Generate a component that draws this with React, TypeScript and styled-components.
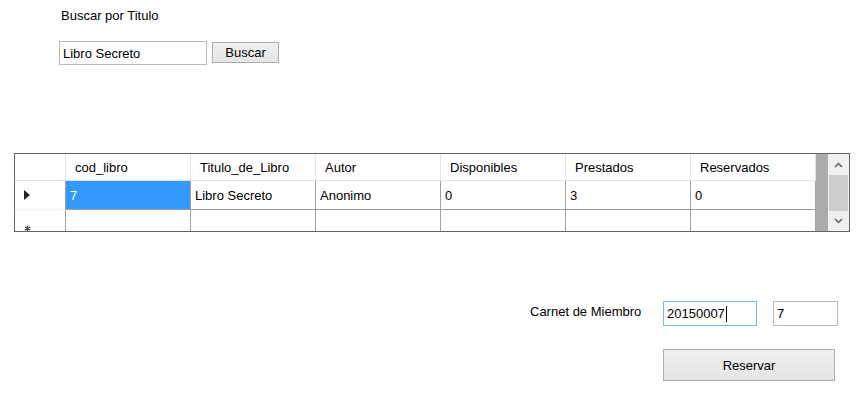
import React from "react";
import styled, { createGlobalStyle } from "styled-components";

const GlobalStyle = createGlobalStyle`
  html, body { margin: 0; padding: 0; background: #ffffff; overflow: hidden; }
  body { font-family: "Liberation Sans", Arial, sans-serif; font-size: 13px; color: #000; }
`;

const Page = styled.div`
  width: 857px;
  height: 417px;
  display: flex;
  flex-direction: column;
`;

const FieldLabel = styled.div<{ $left?: number; $top?: number; $w?: number }>`
  margin-left: ${(p) => p.$left ?? 0}px;
  margin-top: ${(p) => p.$top ?? 0}px;
  ${(p) => (p.$w ? `width: ${p.$w}px;` : "")}
  line-height: 15px;
  white-space: nowrap;
`;

const Row = styled.div<{ $left: number; $top: number }>`
  display: flex;
  align-items: flex-start;
  margin-left: ${(p) => p.$left}px;
  margin-top: ${(p) => p.$top}px;
`;

const TextBox = styled.div<{ $w: number; $h?: number; $focused?: boolean; $ml?: number }>`
  box-sizing: border-box;
  width: ${(p) => p.$w}px;
  height: ${(p) => p.$h ?? 25}px;
  margin-left: ${(p) => p.$ml ?? 0}px;
  border: 1px solid ${(p) => (p.$focused ? "#7eb4ea" : "#b9b9b9")};
  background: #fff;
  padding-left: 3px;
  display: flex;
  align-items: center;
  white-space: nowrap;
`;

const Caret = styled.span`
  display: inline-block;
  width: 1px;
  height: 16px;
  background: #000;
  margin-left: 1px;
`;

const Button = styled.div<{ $w: number; $h: number; $ml?: number; $mt?: number }>`
  box-sizing: border-box;
  width: ${(p) => p.$w}px;
  height: ${(p) => p.$h}px;
  margin-left: ${(p) => p.$ml ?? 0}px;
  margin-top: ${(p) => p.$mt ?? 0}px;
  border: 1px solid #adadad;
  background: linear-gradient(#f0f0f0, #e5e5e5);
  display: flex;
  align-items: center;
  justify-content: center;
`;

/* ---------- Data grid ---------- */

const GridFrame = styled.div`
  box-sizing: border-box;
  margin-left: 14px;
  margin-top: 88px;
  width: 836px;
  height: 79px;
  border: 1px solid #646464;
  display: flex;
  overflow: hidden;
`;

const GridArea = styled.div`
  flex: 1;
  background: #ababab;
  overflow: hidden;
  display: flex;
  flex-direction: column;
`;

const GridRow = styled.div<{ $h: number }>`
  display: flex;
  height: ${(p) => p.$h}px;
  flex-shrink: 0;
`;

const RowHeaderCell = styled.div<{ $header?: boolean; $alignTop?: boolean }>`
  box-sizing: border-box;
  width: 51px;
  flex-shrink: 0;
  background: #fff;
  border-right: 1px solid ${(p) => (p.$header ? "#e0e0e0" : "#a0a0a0")};
  border-bottom: 1px solid ${(p) => (p.$header ? "#e0e0e0" : "#eaf0f6")};
  display: flex;
  align-items: ${(p) => (p.$alignTop ? "flex-start" : "center")};
  padding-left: 9px;
  padding-top: ${(p) => (p.$alignTop ? 15 : 0)}px;
`;

const HeaderCell = styled.div`
  box-sizing: border-box;
  width: 125px;
  flex-shrink: 0;
  background: #fff;
  border-right: 1px solid #e3e3e3;
  border-bottom: 1px solid #e3e3e3;
  padding-left: 9px;
  display: flex;
  align-items: center;
  white-space: nowrap;
`;

const DataCell = styled.div<{ $selected?: boolean }>`
  box-sizing: border-box;
  width: 125px;
  flex-shrink: 0;
  background: ${(p) => (p.$selected ? "#3399ff" : "#fff")};
  color: ${(p) => (p.$selected ? "#fff" : "#000")};
  border-right: 1px solid #a0a0a0;
  border-bottom: 1px solid #a0a0a0;
  padding-left: 4px;
  display: flex;
  align-items: center;
  white-space: nowrap;
`;

const ScrollBar = styled.div`
  width: 21px;
  flex-shrink: 0;
  background: #f0f0f0;
  display: flex;
  flex-direction: column;
`;

const ScrollButton = styled.div<{ $h: number }>`
  height: ${(p) => p.$h}px;
  display: flex;
  align-items: center;
  justify-content: center;
  background: #f0f0f0;
  flex-shrink: 0;
`;

const Thumb = styled.div`
  height: 36px;
  margin: 0 1px;
  background: #cdcdcd;
  flex-shrink: 0;
`;

const Track = styled.div`
  flex: 1;
`;

const Chevron = ({ up }: { up?: boolean }) => (
  <svg width="9" height="6" viewBox="0 0 9 6">
    <path
      d={up ? "M1 5 L4.5 1.5 L8 5" : "M1 1 L4.5 4.5 L8 1"}
      fill="none"
      stroke="#606060"
      strokeWidth="1.5"
    />
  </svg>
);

const RowArrow = () => (
  <svg width="6" height="10" viewBox="0 0 6 10">
    <path d="M0 0 L6 5 L0 10 Z" fill="#222" />
  </svg>
);

const NewRowStar = () => (
  <svg width="7" height="7" viewBox="0 0 7 7">
    <path d="M3.5 0.5 V6.5 M0.8 2 L6.2 5 M0.8 5 L6.2 2" stroke="#444" strokeWidth="1.3" />
  </svg>
);

const columns = ["cod_libro", "Titulo_de_Libro", "Autor", "Disponibles", "Prestados", "Reservados"];
const rowData = ["7", "Libro Secreto", "Anonimo", "0", "3", "0"];

export default function App() {
  return (
    <Page>
      <GlobalStyle />
      <FieldLabel $left={61} $top={8}>Buscar por Titulo</FieldLabel>
      <Row $left={59} $top={18}>
        <TextBox $w={148} $h={24}>Libro Secreto</TextBox>
        <Button $w={67} $h={21} $ml={5} $mt={1}>Buscar</Button>
      </Row>

      <GridFrame>
        <GridArea>
          <GridRow $h={27}>
            <RowHeaderCell $header />
            {columns.map((c) => (
              <HeaderCell key={c}>{c}</HeaderCell>
            ))}
          </GridRow>
          <GridRow $h={29}>
            <RowHeaderCell>
              <RowArrow />
            </RowHeaderCell>
            {rowData.map((d, i) => (
              <DataCell key={i} $selected={i === 0}>{d}</DataCell>
            ))}
          </GridRow>
          <GridRow $h={24}>
            <RowHeaderCell $alignTop>
              <NewRowStar />
            </RowHeaderCell>
            {rowData.map((_, i) => (
              <DataCell key={i} />
            ))}
          </GridRow>
        </GridArea>
        <ScrollBar>
          <ScrollButton $h={21}><Chevron up /></ScrollButton>
          <Thumb />
          <Track />
          <ScrollButton $h={20}><Chevron /></ScrollButton>
        </ScrollBar>
      </GridFrame>

      <Row $left={530} $top={69}>
        <FieldLabel $top={3} $w={133}>Carnet de Miembro</FieldLabel>
        <TextBox $w={94} $focused>
          20150007<Caret />
        </TextBox>
        <TextBox $w={65} $ml={16}>7</TextBox>
      </Row>
      <Row $left={663} $top={23}>
        <Button $w={172} $h={32}>Reservar</Button>
      </Row>
    </Page>
  );
}
